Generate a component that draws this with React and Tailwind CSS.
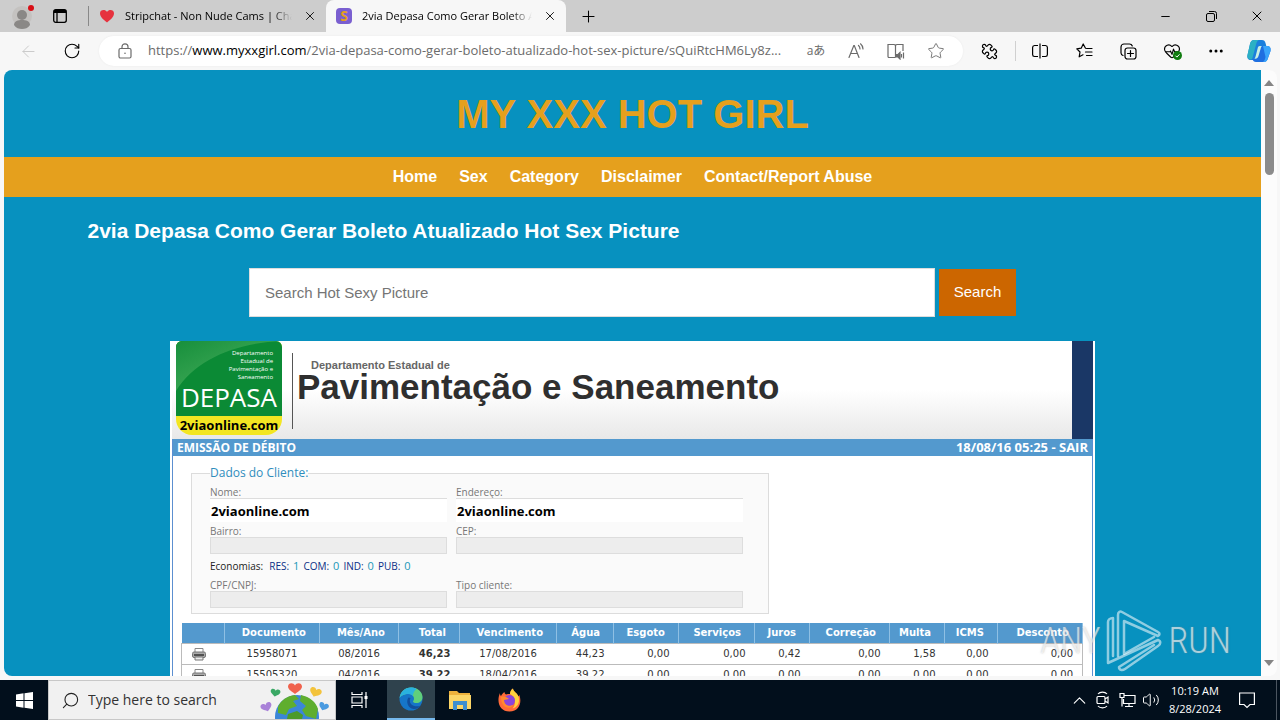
import {
  ArrowLeft,
  ChevronUp,
  Ellipsis,
  HeartPulse,
  Lock,
  Minus,
  Plus,
  Puzzle,
  RotateCw,
  Search,
  Star,
  Volume2,
  X,
} from "lucide-react";

const navLinks = ["Home", "Sex", "Category", "Disclaimer", "Contact/Report Abuse"];

const columns = [
  { label: "", width: "w-[43px]" },
  { label: "Documento", width: "w-[95px]" },
  { label: "Mês/Ano", width: "w-[79px]" },
  { label: "Total", width: "w-[61px]" },
  { label: "Vencimento", width: "w-[97px]" },
  { label: "Água", width: "w-[57px]" },
  { label: "Esgoto", width: "w-[65px]" },
  { label: "Serviços", width: "w-[76px]" },
  { label: "Juros", width: "w-[55px]" },
  { label: "Correção", width: "w-[80px]" },
  { label: "Multa", width: "w-[55px]" },
  { label: "ICMS", width: "w-[53px]" },
  { label: "Desconto", width: "w-[85px]" },
];

const bills = [
  {
    doc: "15958071",
    month: "08/2016",
    total: "46,23",
    due: "17/08/2016",
    values: ["44,23", "0,00", "0,00", "0,42", "0,00", "1,58", "0,00", "0,00"],
  },
  {
    doc: "15505320",
    month: "04/2016",
    total: "39,22",
    due: "18/04/2016",
    values: ["39,22", "0,00", "0,00", "0,00", "0,00", "0,00", "0,00", "0,00"],
  },
];

const economies = [
  { label: "RES:", value: 1 },
  { label: "COM:", value: 0 },
  { label: "IND:", value: 0 },
  { label: "PUB:", value: 0 },
];

function IconButton({ label, className, children }) {
  return (
    <button
      type="button"
      aria-label={label}
      className={`flex h-full shrink-0 items-center justify-center ${className}`}
    >
      {children}
    </button>
  );
}

function Tab({ icon, title, active }) {
  return (
    <div
      className={`flex h-full items-center gap-2.5 pr-2 pl-2.5 ${
        active ? "w-60 rounded-t-lg bg-[#f7f7f7]" : "w-[237px]"
      }`}
    >
      {icon}
      <button
        type="button"
        className="min-w-0 flex-1 overflow-hidden text-left text-[11px] whitespace-nowrap [mask-image:linear-gradient(to_right,#000_88%,transparent)]"
      >
        {title}
      </button>
      <button type="button" aria-label="Close tab" className="flex w-4 justify-center">
        <X size={14} strokeWidth={1.5} />
      </button>
    </div>
  );
}

function TabBar() {
  return (
    <div className="flex h-8 shrink-0 bg-[#cdcdcd] text-black">
      <IconButton label="Profile" className="w-11">
        <svg width="24" height="26" viewBox="0 0 24 26">
          <circle cx="12" cy="13" r="10" fill="#c4c2c0" />
          <circle cx="12" cy="12" r="5" fill="#8a8886" />
          <path d="M4 22c0-4 4-5 8-5s8 1 8 5c-2 3-5 4-8 4s-6-1-8-4z" fill="#8a8886" />
          <circle cx="21" cy="5" r="3" fill="#d80f16" />
        </svg>
      </IconButton>
      <IconButton label="Tab actions" className="w-8">
        <svg width="14" height="14" viewBox="0 0 14 14" fill="none" stroke="#000" strokeWidth="1.3">
          <rect x="0.7" y="0.7" width="12.6" height="12.6" rx="2" />
          <path d="M4 4v9" />
          <path d="M1 2.5h12" strokeWidth="3" />
        </svg>
      </IconButton>
      <div className="my-1.5 ml-3 w-px bg-[#888]" />
      <Tab
        title="Stripchat - Non Nude Cams | Cha"
        icon={
          <svg width="16" height="16" viewBox="0 0 16 16">
            <path d="M8 14.5C5 12 1 9 1 5.2 1 1.8 6 .8 8 4c2-3.200 7-2.200 7 1.200C15 9 11 12 8 14.500z" fill="#e6323e" />
          </svg>
        }
      />
      <Tab
        active
        title="2via Depasa Como Gerar Boleto A"
        icon={
          <span className="flex size-4 items-center justify-center rounded-sm bg-[#7a5fd0] text-sm leading-4 font-bold text-[#e5a01d]">
            S
          </span>
        }
      />
      <IconButton label="New tab" className="w-11">
        <Plus size={19} strokeWidth={1.3} />
      </IconButton>
      <div className="flex-1" />
      <IconButton label="Minimize" className="w-[46px]">
        <Minus size={13} strokeWidth={1.8} />
      </IconButton>
      <IconButton label="Restore" className="w-[46px]">
        <svg width="11" height="11" viewBox="0 0 11 11" fill="none" stroke="#000">
          <rect x="0.5" y="2.500" width="8" height="8" rx="1.500" />
          <path d="M3 .5h5.500a2 2 0 0 1 2 2V8" />
        </svg>
      </IconButton>
      <IconButton label="Close" className="w-[46px]">
        <X size={16} strokeWidth={1.5} />
      </IconButton>
    </div>
  );
}

function SplitIcon() {
  return (
    <svg width="16" height="16" viewBox="0 0 16 16" fill="none" stroke="#000" strokeWidth="1.200">
      <path d="M6 2.500H2.500a2 2 0 0 0-1.900 2v7a2 2 0 0 0 1.900 2H6M10 2.500h3.500a2 2 0 0 1 1.900 2v7a2 2 0 0 1-1.900 2H10M8 .5v15" />
    </svg>
  );
}

function FavoritesIcon() {
  return (
    <svg width="17" height="16" viewBox="0 0 17 16" fill="none" stroke="#000" strokeWidth="1.200" strokeLinejoin="round" strokeLinecap="round">
      <path d="M9.500 5.200 7.200 1 5.200 5.200.8 5.800 4 9l-.8 4.800L7 11.800M10.500 5.500H16M9.500 9H16M10.500 12.500H16" />
    </svg>
  );
}

function CollectionsIcon() {
  return (
    <svg width="17" height="17" viewBox="0 0 17 17" fill="none" stroke="#000" strokeWidth="1.200" strokeLinecap="round">
      <rect x="5" y="5" width="11" height="11" rx="2.500" />
      <path d="M10.500 7.500v6M7.500 10.500h6M3 12.500A3 3 0 0 1 1 10V4a3 3 0 0 1 3-3h5.500a3 3 0 0 1 2.800 2" />
    </svg>
  );
}

function CopilotIcon() {
  return (
    <svg width="24" height="24" viewBox="0 0 24 24">
      <path d="M7 1h8c2 0 3 1 3.500 3l.8 3H15c-2 0-3 1-3.500 3l-2 8c-.5 2-1 3-3 3H4c-3 0-4-2-3.500-5L3 5c.6-2.500 2-4 4-4z" fill="#1b7fdc" />
      <path d="M3 5c.6-2.500 2-4 4-4h5c-1.500.5-2.300 2-2.800 4L6 17c-.5 2-1 4-3 3.500C.5 20 0 18 .5 16z" fill="#2bb0c4" />
      <path d="M17 23H9c-2 0-3-1-3.500-3H7c2 0 3-1 3.500-3l2-8c.5-2 1-2 2.500-2h5c3 0 4 2 3.500 5L21 19c-.6 2.500-2 4-4 4z" fill="#1f6fe0" />
      <path d="M16 7h4c3 0 4 2 3.500 5L21 19c-.6 2.500-2 4-4 4h-1c1.500-1 2-3 2.500-5z" fill="#3aa5fa" />
      <path d="m11 8-2.300 9c-.3 1-.6 2-1.200 2.700 2 .3 3.300-.7 4-2.700L14 8.500c.2-.8.600-1.500 1.500-1.500-2 0-3.500-.5-4.500 1z" fill="#c9f0e4" />
    </svg>
  );
}

function Toolbar() {
  return (
    <div className="flex h-[38px] shrink-0 items-center bg-[#f7f7f7]">
      <IconButton label="Back" className="ml-1.5 w-11 text-[#c8c8c8]">
        <ArrowLeft size={19} strokeWidth={1.2} />
      </IconButton>
      <IconButton label="Refresh" className="w-11">
        <RotateCw size={18} strokeWidth={1.5} />
      </IconButton>
      <div className="ml-[5px] flex h-[30px] min-w-0 flex-1 items-center rounded-full bg-white pr-[7px] pl-[18px] text-[#6b6b6b] shadow-[0_0_2px_#e8e8e8]">
        <svg width="16" height="16" viewBox="0 0 16 16" fill="none" stroke="#6b6b6b" strokeWidth="1.200">
          <rect x="2" y="5.500" width="12" height="9.500" rx="1.500" />
          <path d="M5 5.500V3.800a3 3 0 0 1 6 0v1.700" />
          <circle cx="8" cy="10.200" r="0.800" fill="#6b6b6b" stroke="none" />
        </svg>
        <label className="relative ml-[15px] flex h-full min-w-0 flex-1 items-center text-[13px]">
          <input aria-label="Address" className="absolute inset-0 w-full bg-transparent outline-none" />
          <span className="pointer-events-none relative whitespace-nowrap">
            https://<span className="text-black">www.myxxgirl.com</span>
            /2via-depasa-como-gerar-boleto-atualizado-hot-sex-picture/sQuiRtcHM6Ly8z...
          </span>
        </label>
        <IconButton label="Translate" className="w-10 font-['Open_Sans','Noto_Sans_CJK_JP',sans-serif] text-xs">
          aあ
        </IconButton>
        <IconButton label="Read aloud" className="w-10">
          <svg width="17" height="16" viewBox="0 0 17 16" fill="none" stroke="#6b6b6b" strokeWidth="1.200" strokeLinecap="round">
            <path d="M1 14.500 5.800 2.500h.5l4.700 12M2.800 10.500h6.500M10.500 2.500c1.200 1 1.500 2 1.500 3.500M12.500.8c1.800 1.500 2.500 3.200 2.500 5.200" />
          </svg>
        </IconButton>
        <IconButton label="Immersive reader" className="w-10">
          <svg width="18" height="17" viewBox="0 0 18 17" fill="none" stroke="#6b6b6b" strokeWidth="1.200">
            <path d="M8.500 2.500v12M8.500 14.500H2a1 1 0 0 1-1-1V1.500h5.500a2 2 0 0 1 2 1 2 2 0 0 1 2-1H16V8" />
            <path d="M9.500 11.500H11l2-2v6.500l-2-2H9.500z" fill="#6b6b6b" />
            <path d="M14.500 11v3.500M16.500 9.500v6" />
          </svg>
        </IconButton>
        <IconButton label="Add to favorites" className="w-10">
          <Star size={18} strokeWidth={1.2} />
        </IconButton>
      </div>
      <IconButton label="Extensions" className="ml-1 w-11">
        <Puzzle size={17} strokeWidth={1.7} className="-scale-x-100" />
      </IconButton>
      <div className="mr-1 ml-1 h-5 w-px bg-[#d0d0d0]" />
      <IconButton label="Split screen" className="w-10">
        <SplitIcon />
      </IconButton>
      <IconButton label="Favorites" className="ml-0.5 w-11">
        <FavoritesIcon />
      </IconButton>
      <IconButton label="Collections" className="w-11">
        <CollectionsIcon />
      </IconButton>
      <IconButton label="Browser essentials" className="relative w-11">
        <HeartPulse size={18} strokeWidth={1.5} />
        <svg width="9" height="9" viewBox="0 0 9 9" className="absolute right-3 bottom-2.5">
          <circle cx="4.500" cy="4.500" r="4.500" fill="#107c10" />
          <path d="m2.500 4.700 1.400 1.400 2.600-2.800" fill="none" stroke="#fff" />
        </svg>
      </IconButton>
      <IconButton label="More" className="w-11">
        <Ellipsis size={18} strokeWidth={2} />
      </IconButton>
      <IconButton label="Copilot" className="w-[42px]">
        <CopilotIcon />
      </IconButton>
    </div>
  );
}

function PrinterIcon() {
  return (
    <svg width="14" height="14" viewBox="0 0 14 14" className="mx-auto">
      <path d="M3 1.500h8v4H3z" fill="#fff" stroke="#888" />
      <rect x="0.500" y="5" width="13" height="5.500" rx="1.500" fill="#aaa" stroke="#777" />
      <path d="M2 8h10" stroke="#333" strokeWidth="1.500" />
      <path d="M3 10h8v3H3z" fill="#eee" stroke="#777" />
    </svg>
  );
}

function Field({ id, label, value }) {
  return (
    <div className="flex flex-col">
      <label htmlFor={id} className="text-[10px] leading-3 font-medium text-[#777]">
        {label}
      </label>
      {value ? (
        <input
          id={id}
          defaultValue={value}
          className="h-6 w-full border-t border-[#ddd] bg-white px-px text-[13px] font-bold text-black"
        />
      ) : (
        <input id={id} className="h-[17px] w-full border border-[#ddd] bg-[#ededed]" />
      )}
    </div>
  );
}

function BillHeader() {
  return (
    <div className="flex h-[98px] bg-linear-to-b from-white from-50% to-[#e8e8e8]">
      <div className="ml-1 flex h-[94px] w-[106px] shrink-0 flex-col overflow-hidden rounded-t-md rounded-b-2xl bg-[#f3e622] text-white">
        <div className="relative flex h-[75px] flex-col items-end bg-[#0b8a35] pt-2 pr-[9px] text-right">
          <svg width="106" height="75" viewBox="0 0 106 75" className="absolute inset-0">
            <defs>
              <linearGradient id="leaf" x1="0" y1="0" x2="1" y2="1">
                <stop offset="0" stopColor="#178f3c" />
                <stop offset="0.500" stopColor="#35a350" />
                <stop offset="1" stopColor="#0b8a35" />
              </linearGradient>
            </defs>
            <path d="M0 0h106C60 2 20 18 0 50z" fill="url(#leaf)" />
          </svg>
          <p className="relative text-[6px] leading-2">
            Departamento
            <br />
            Estadual de
            <br />
            Pavimentação e
            <br />
            Saneamento
          </p>
          <p className="relative -mr-1 text-[26px] leading-8">DEPASA</p>
        </div>
        <p className="text-center text-[13px] leading-[19px] font-bold text-black">2viaonline.com</p>
      </div>
      <div className="mt-3 ml-2.5 h-[76px] w-px bg-[#555]" />
      <div className="ml-1 flex-1 pt-[18px] font-['Liberation_Sans',Arial,sans-serif] font-bold whitespace-nowrap">
        <p className="pl-3.5 text-[11px] leading-3 text-[#666]">Departamento Estadual de</p>
        <p className="text-[35px] leading-8 text-[#2f2f2f]">Pavimentação e Saneamento</p>
      </div>
      <div className="w-[21px] bg-[#1a3766]" />
    </div>
  );
}

function BillTable() {
  return (
    <table className="mt-[9px] ml-2 w-[901px] table-fixed border-collapse font-['DejaVu_Sans',Verdana,sans-serif] text-[10px]">
      <thead>
        <tr className="h-5 bg-[#5399ce] text-white">
          {columns.map((column) => (
            <th
              key={column.label || "print"}
              className={`${column.width} border-r border-[#8fc0e4] p-0 pr-[13px] text-right leading-3 font-bold`}
            >
              {column.label}
            </th>
          ))}
        </tr>
      </thead>
      <tbody className="text-[#333]">
        {bills.map((bill) => (
          <tr key={bill.doc} className="h-[21px] border border-[#bbb]">
            <td className="p-0 pr-2">
              <PrinterIcon />
            </td>
            <td className="p-0 text-center leading-3">{bill.doc}</td>
            <td className="p-0 text-center leading-3">{bill.month}</td>
            <td className="p-0 pr-[9px] text-right leading-3 font-bold">{bill.total}</td>
            <td className="p-0 text-center leading-3">{bill.due}</td>
            {bill.values.map((value, index) => (
              <td key={index} className="p-0 pr-[9px] text-right leading-3">
                {value}
              </td>
            ))}
          </tr>
        ))}
      </tbody>
    </table>
  );
}

function Bill() {
  return (
    <div className="mx-auto mt-6 w-full max-w-[925px] bg-white px-0.5">
      <BillHeader />
      <div className="border-x border-[#5c8fd0]">
        <div className="flex h-[17px] items-center justify-between bg-[#5399ce] px-1 font-bold text-white">
          <span className="text-xs">EMISSÃO DE DÉBITO</span>
          <span className="text-[13px]">18/08/16 05:25 - SAIR</span>
        </div>
        <fieldset className="mt-[9px] ml-[18px] w-[578px] border border-[#dcdcdc] bg-[#fafafa] px-[18px] pt-[5px] pb-[5px]">
          <legend className="text-xs leading-4 font-medium text-[#2f8dbd]">Dados do Cliente:</legend>
          <div className="grid grid-cols-[237px_287px] gap-x-[9px] gap-y-[3px]">
            <Field id="nome" label="Nome:" value="2viaonline.com" />
            <Field id="endereco" label="Endereço:" value="2viaonline.com" />
            <Field id="bairro" label="Bairro:" />
            <Field id="cep" label="CEP:" />
          </div>
          <p className="flex h-[25px] items-center gap-1 text-[10px] text-[#222]">
            <span className="mr-0.5">Economias:</span>
            {economies.map((item) => (
              <span key={item.label} className="flex items-center gap-1 font-medium text-[#0a2f86]">
                {item.label}
                <span className="text-[11px] text-[#1b98b8]">{item.value}</span>
              </span>
            ))}
          </p>
          <div className="grid grid-cols-[237px_287px] gap-x-[9px]">
            <Field id="cpf" label="CPF/CNPJ:" />
            <Field id="tipo" label="Tipo cliente:" />
          </div>
        </fieldset>
        <BillTable />
      </div>
    </div>
  );
}

function Page() {
  return (
    <main className="min-w-0 flex-1 overflow-hidden rounded-l-lg bg-[#0791bf] font-['Liberation_Sans',Arial,sans-serif]">
      <header className="flex h-[87px] items-center justify-center">
        <a href="#home" className="text-[40px] leading-none font-bold text-[#e5a01d]">
          MY XXX HOT GIRL
        </a>
      </header>
      <nav className="flex h-10 items-center justify-center gap-[22px] bg-[#e5a01d] font-bold text-white">
        {navLinks.map((link) => (
          <a key={link} href={`#${link}`}>
            {link}
          </a>
        ))}
      </nav>
      <div className="mx-auto max-w-[1090px] pt-[18px]">
        <h1 className="text-[21px] leading-8 font-bold text-white">
          2via Depasa Como Gerar Boleto Atualizado Hot Sex Picture
        </h1>
        <form className="mx-auto mt-[21px] flex w-full max-w-[767px] items-center gap-1" onSubmit={(e) => e.preventDefault()}>
          <input
            type="search"
            aria-label="Search Hot Sexy Picture"
            placeholder="Search Hot Sexy Picture"
            className="h-[49px] min-w-0 flex-1 border border-[#ddd] bg-white px-[15px] text-[15px] placeholder:text-[#757575]"
          />
          <button type="submit" className="h-[47px] w-[77px] bg-[#cc6600] text-[15px] text-white">
            Search
          </button>
        </form>
        <div className="font-['Open_Sans','Noto_Sans',sans-serif]">
          <Bill />
        </div>
      </div>
    </main>
  );
}

function ScrollBar() {
  return (
    <div className="flex w-4 shrink-0 flex-col items-center rounded-r-lg bg-[#fcfcfc] py-2.5">
      <svg width="10" height="6" viewBox="0 0 10 6">
        <path d="M5 0 10 6H0z" fill="#858585" />
      </svg>
      <div className="mt-[7px] h-[82px] w-[9px] rounded-full bg-[#8b8b8b]" />
      <div className="flex-1" />
      <svg width="10" height="6" viewBox="0 0 10 6">
        <path d="M0 0h10L5 6z" fill="#858585" />
      </svg>
    </div>
  );
}

function Watermark() {
  return (
    <div className="pointer-events-none absolute right-[49px] bottom-[48px] flex items-center gap-1.5 font-['Roboto_Condensed','Liberation_Sans_Narrow',Roboto,sans-serif] text-[36px] leading-none font-light text-white/60 [text-shadow:0_0_2px_#8888]">
      <span>ANY</span>
      <svg width="56" height="62" viewBox="0 0 56 62" fill="none" stroke="#fff" strokeOpacity="0.55" strokeWidth="2.500" strokeLinejoin="round" strokeLinecap="round">
        <path d="M12 46V5c0-3 2-4 4-3l36 20c2 1 2 3 0 4L18 11v33l30-17" />
        <path d="M7 8C4 8 2 10 2 12v41l50-23c3 1 3 4 0 6L19 59c-3 2-6 1-6-2l35-22M7 8v38" />
      </svg>
      <span>RUN</span>
    </div>
  );
}

function Globe() {
  const heart = "M0 2.500C-1.500-1-7-.5-7 3.500-7 7-2 9 0 11c2-2 7-4 7-7.500C7-.5 1.500-1 0 2.500z";
  return (
    <svg width="72" height="38" viewBox="0 0 72 38" className="mr-1 shrink-0">
      <circle cx="38" cy="36" r="22" fill="#3b86d8" />
      <path d="M19 26c3-7 9-11 17-12l4 4-6 2 4 5-8 3-3 6-8-2z" fill="#5fae2e" />
      <path d="M42 14c9 2 15 7 17 14l-2 10-10-3-4-6 4-4-6-5z" fill="#5fae2e" />
      <path d="m29 33 9-3 6 4-1 4H28z" fill="#4c9a2a" />
      <path d={heart} transform="translate(36 2)" fill="#f0624d" />
      <path d={heart} transform="translate(17 8) rotate(10) scale(.7)" fill="#3aa865" />
      <path d={heart} transform="translate(58 7) rotate(20) scale(.85)" fill="#f3c33b" />
      <path d={heart} transform="translate(6 22) rotate(-20) scale(.8)" fill="#a982d8" />
      <path d={heart} transform="translate(66 22) rotate(20) scale(.7)" fill="#4a9be0" />
    </svg>
  );
}

function Taskbar() {
  return (
    <footer className="flex h-10 shrink-0 items-center bg-[#020f1c] text-white">
      <IconButton label="Start" className="w-12">
        <svg width="17" height="17" viewBox="0 0 17 17" fill="#fff">
          <path d="M0 2.400 7.500 1.300V8H0zM8.500 1.200 17 0v8H8.500zM0 9h7.500v6.700L0 14.600zM8.500 9H17v8l-8.500-1.200z" />
        </svg>
      </IconButton>
      <label className="flex h-full w-72 items-center border border-[#c8c8c8] bg-[#f1f1f1] pl-3 text-[#222]">
        <Search size={19} strokeWidth={1.4} className="shrink-0 -scale-x-100" />
        <input
          aria-label="Type here to search"
          placeholder="Type here to search"
          className="ml-2 min-w-0 flex-1 bg-transparent text-sm placeholder:text-[#333]"
        />
        <Globe />
      </label>
      <IconButton label="Task view" className="w-12">
        <svg width="18" height="16" viewBox="0 0 18 16" fill="none" stroke="#fff" strokeWidth="1.200">
          <path d="M1 0v2.500h10V0M1 16v-2.500h10V16M1 5h10v6H1zM15 0v16" />
          <path d="M13.500 4h3v3h-3z" fill="#fff" stroke="none" />
        </svg>
      </IconButton>
      <IconButton label="Microsoft Edge" className="ml-[3px] w-12 border-b-2 border-[#76b9ed] bg-[#2f424d]">
        <svg width="24" height="24" viewBox="0 0 24 24">
          <circle cx="12" cy="12" r="11.500" fill="#1676c8" />
          <path d="M.6 11C1.500 4.500 6.500.5 12 .5c7 0 11.500 4.700 11.500 9.500 0 4-3 6-6 6-2.500 0-3.500-1-3.500-1.600 0-.8 1-1 1-3C15 9 12.500 7 9.500 7 5 7 1.500 9 .6 11z" fill="#5fcf7c" />
          <path d="M.6 11C1.500 4.500 6.500.5 12 .5c2 0 4 .5 5.500 1.400C15 4 14 6 14 9c-1-1.300-2.600-2-4.500-2C5 7 1.500 9 .6 11z" fill="#2ab2df" />
          <path d="M9.500 10.500c-3 4-.5 11 5 11.500 3 .2 5.500-1 7.500-3.500-3 1.500-8 1-10-1.500-1.500-2-1.500-4-.5-6z" fill="#124f9c" />
        </svg>
      </IconButton>
      <IconButton label="File Explorer" className="w-[49px]">
        <svg width="22" height="20" viewBox="0 0 22 20">
          <path d="M0 1h8l2 2h11v16H0z" fill="#eeb23c" />
          <path d="M0 5h22v14H0z" fill="#fcd667" />
          <path d="M4 11h14v9h-4v-5H8v5H4z" fill="#3f8fd0" />
        </svg>
      </IconButton>
      <IconButton label="Firefox" className="w-[49px]">
        <svg width="24" height="24" viewBox="0 0 24 24">
          <path d="M3 5c0 1.500.3 2.500 1 3 1-2 2-3 3.500-4 0 1 .5 2 1.500 2.500C10 6 12 6 13 6c0-2 1-4.500 3-5.500 0 3 4 4 5.500 8C22 8 22 7.500 22 6.500c3 6 1.500 17-9.500 17C3 23.500-1 14 3 5z" fill="#ff6a39" />
          <path d="M13 6c0-2 1-4.500 3-5.500 0 3 4 4 5.500 8 2 7-2 11-6 12C19 17 19 9 13 6z" fill="#ffd23d" />
          <circle cx="12.500" cy="12.500" r="5.500" fill="#8a45db" />
          <path d="M4 9c3-1 6 0 8 2-2 0-3 1-5 1 0 5 5 7 9 5-1 4-12 5-12-8z" fill="#ff8a2e" />
        </svg>
      </IconButton>
      <div className="flex-1" />
      <IconButton label="Show hidden icons" className="w-6">
        <ChevronUp size={21} strokeWidth={1.3} />
      </IconButton>
      <IconButton label="Meet now" className="w-6">
        <svg width="14" height="18" viewBox="0 0 14 18" fill="none" stroke="#fff" strokeWidth="1.200">
          <rect x="1" y="5.500" width="8" height="7" rx="1" />
          <path d="m9 8 3-2v6l-3-2M2 3c2-2.500 7-2.500 9 0M2 15c2 2.500 7 2.500 9 0" />
        </svg>
      </IconButton>
      <IconButton label="Network" className="w-6">
        <svg width="17" height="16" viewBox="0 0 17 16" fill="none" stroke="#fff" strokeWidth="1.200">
          <path d="M5 3.500h11v8H4.500V7M10 11.500v3M6 14.500h8M1 1.500h4v4H1zM3 5.500v9" />
        </svg>
      </IconButton>
      <IconButton label="Volume" className="w-6">
        <Volume2 size={18} strokeWidth={1.3} />
      </IconButton>
      <button type="button" className="h-full w-16 text-center text-[11px] leading-[18px]">
        10:19 AM
        <br />
        8/28/2024
      </button>
      <IconButton label="Notifications" className="w-10">
        <svg width="16" height="17" viewBox="0 0 16 17" fill="none" stroke="#fff" strokeWidth="1.200">
          <path d="M.6 1h14.800v11.500H11L8 15.500l-3-3H.6z" />
        </svg>
      </IconButton>
      <div className="ml-[9px] h-full w-1 border-l border-[#4b5560]" />
    </footer>
  );
}

export default function App() {
  return (
    <div className="relative flex h-screen flex-col overflow-hidden bg-[#f7f7f7] font-['Open_Sans','Noto_Sans',sans-serif]">
      <TabBar />
      <Toolbar />
      <div className="flex min-h-0 flex-1 pr-[3px] pb-1 pl-1">
        <Page />
        <ScrollBar />
      </div>
      <Watermark />
      <Taskbar />
    </div>
  );
}
